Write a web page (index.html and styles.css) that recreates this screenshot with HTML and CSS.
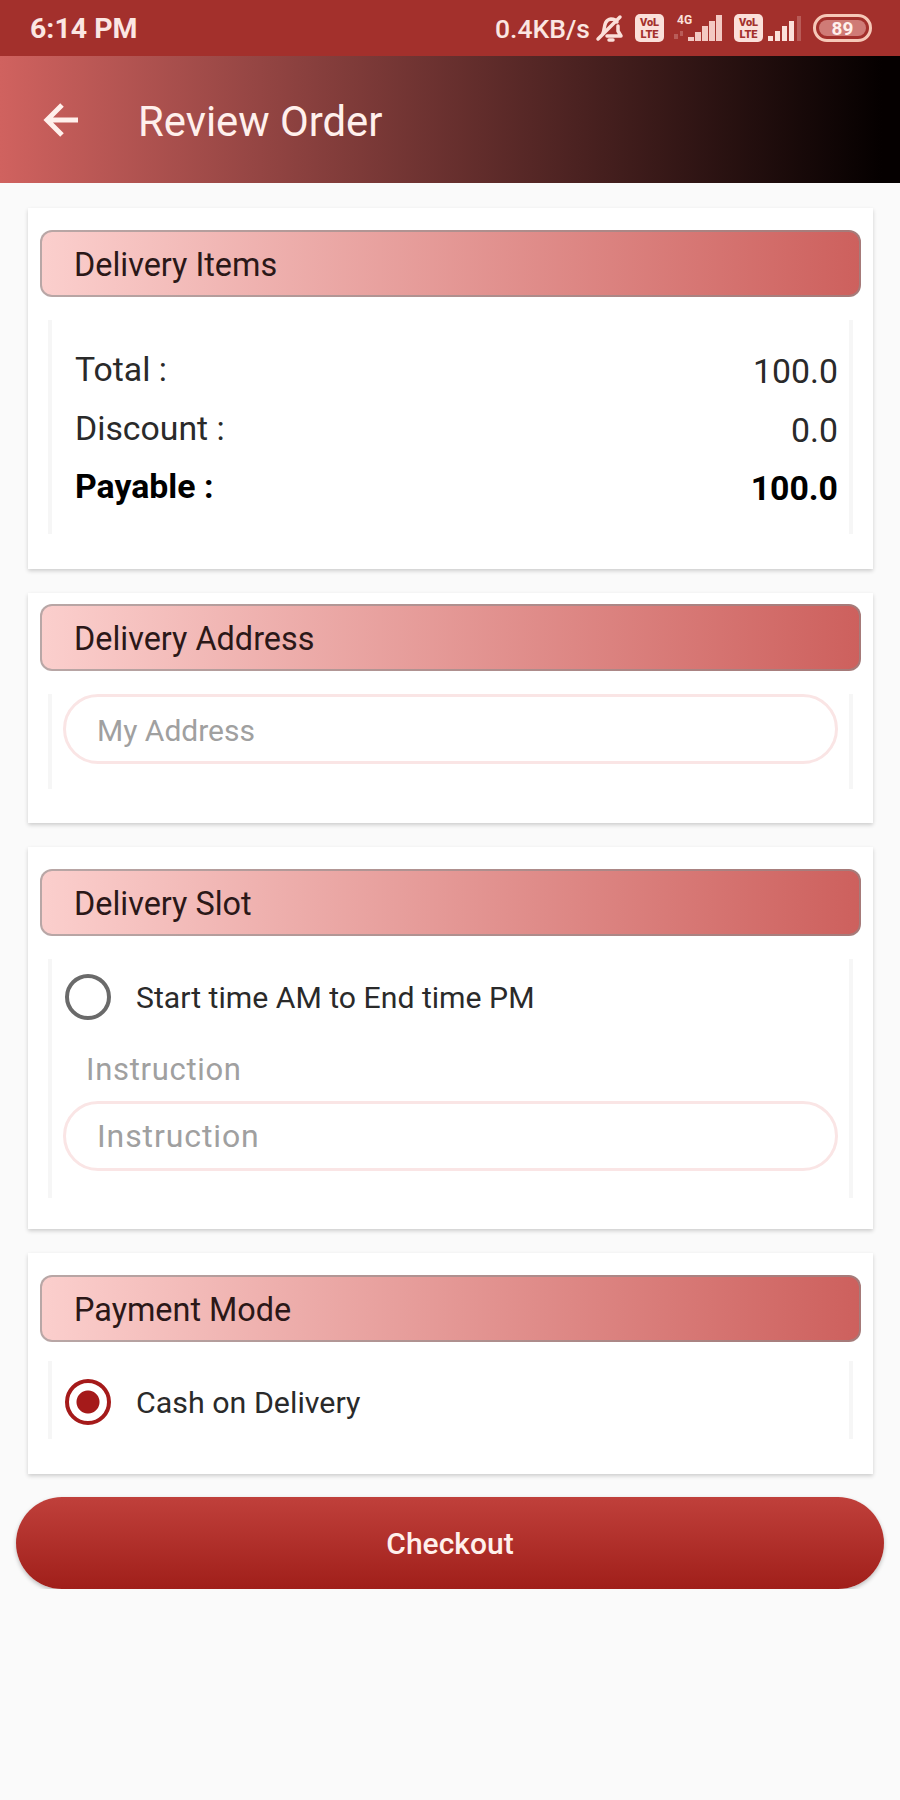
FILE: index.html
```
<!DOCTYPE html>
<html lang="en">
<head>
    <meta charset="UTF-8">
    <meta name="viewport" content="width=device-width, initial-scale=1.0">
    <title>Review Order</title>
    <link rel="stylesheet" href="styles.css">
</head>
<body>
    <div class="status-bar">
        <span class="clock">6:14 PM</span>
        <div class="status-icons">
            <span class="speed">0.4KB/s</span>
            <svg class="bell" width="30" height="30" viewBox="0 0 30 30" fill="none" stroke="#fbe0da" stroke-width="3.5" stroke-linecap="round" stroke-linejoin="round">
                <path d="M8 20c2-3 0-13 8-14 3 0 5 1 6 3M12 23h14l-3-5v-5"/>
                <path d="M14 27h4M25 4L3 26"/>
            </svg>
            <svg class="volte" width="29" height="28" viewBox="0 0 29 28">
                <rect width="29" height="28" rx="5" fill="#fbe0da"/>
                <text x="14.500" y="12" class="volte-text">VoL</text>
                <text x="14.500" y="24" class="volte-text">LTE</text>
            </svg>
            <svg class="signal-4g" width="50" height="28" viewBox="0 0 50 28">
                <text x="3" y="10" class="net-text">4G</text>
                <path d="M0 20h4v5H0zM6 17h3v5H6z" fill="#fbe0da" opacity="0.25"/>
                <g fill="#f3c9c3">
                    <rect x="14" y="23" width="6" height="4"/>
                    <rect x="21" y="18" width="6" height="9"/>
                    <rect x="28" y="12" width="6" height="15"/>
                    <rect x="35" y="7" width="6" height="20"/>
                    <rect x="42" y="1" width="6" height="26"/>
                </g>
            </svg>
            <svg class="volte" width="29" height="28" viewBox="0 0 29 28">
                <rect width="29" height="28" rx="5" fill="#fbe0da"/>
                <text x="14.500" y="12" class="volte-text">VoL</text>
                <text x="14.500" y="24" class="volte-text">LTE</text>
            </svg>
            <svg class="signal" width="34" height="28" viewBox="0 0 34 28" fill="#fbe0da">
                <rect x="0" y="22" width="5" height="5"/>
                <rect x="7" y="17" width="5" height="10"/>
                <rect x="14" y="12" width="5" height="15"/>
                <rect x="21" y="7" width="5" height="20"/>
                <rect x="29" y="2" width="4" height="25" opacity="0.25"/>
            </svg>
            <div class="battery"><span>89</span></div>
        </div>
    </div>

    <div class="toolbar">
        <svg class="back" width="36" height="36" viewBox="0 0 36 36" fill="none" stroke="#fff0ec" stroke-width="5">
            <path d="M35 18H5M19 3L4 18l15 15"/>
        </svg>
        <h1>Review Order</h1>
    </div>

    <form id="orderForm">
        <div class="card items">
            <h2>Delivery Items</h2>
            <div class="panel totals">
                <div class="row"><span>Total :</span><span class="value">100.0</span></div>
                <div class="row"><span>Discount :</span><span class="value">0.0</span></div>
                <div class="row payable"><span>Payable :</span><span class="value">100.0</span></div>
            </div>
        </div>

        <div class="card address">
            <h2>Delivery Address</h2>
            <div class="panel">
                <input type="text" class="field" name="address" placeholder="My Address">
            </div>
        </div>

        <div class="card slot">
            <h2>Delivery Slot</h2>
            <div class="panel">
                <label class="option"><input type="radio" name="slot">Start time AM to End time PM</label>
                <label class="hint" for="instruction">Instruction</label>
                <input type="text" class="field instruction" id="instruction" name="instruction" placeholder="Instruction">
            </div>
        </div>

        <div class="card payment">
            <h2>Payment Mode</h2>
            <div class="panel">
                <label class="option"><input type="radio" name="payment" checked>Cash on Delivery</label>
            </div>
        </div>

        <input type="submit" value="Checkout">
    </form>
</body>
</html>
```

FILE: styles.css
```
* {
    box-sizing: border-box;
}

body {
    font-family: Roboto, "Liberation Sans", sans-serif;
    margin: 0;
    padding: 0;
    background-color: #fafafa;
    color: #2a2a2a;
}

.status-bar {
    display: flex;
    justify-content: space-between;
    align-items: center;
    height: 56px;
    padding: 0 28px 0 30px;
    background-color: #a3302c;
    color: #fbe6e2;
}

.clock {
    font-size: 28.5px;
    font-weight: 700;
}

.status-icons {
    display: flex;
    align-items: center;
}

.speed {
    font-size: 26.5px;
    font-weight: 500;
}

.bell {
    margin-left: 5px;
}

.volte {
    margin-left: 10px;
}

.volte-text {
    font-size: 11px;
    font-weight: 900;
    text-anchor: middle;
    fill: #a3302c;
}

.signal-4g {
    margin-left: 10px;
}

.net-text {
    font-size: 12px;
    font-weight: 700;
    fill: #fbe0da;
}

.signal {
    margin-left: 5px;
}

.battery {
    display: flex;
    width: 59px;
    height: 28px;
    margin-left: 11px;
    padding: 3px;
    border: 3px solid #f6c8b8;
    border-radius: 14px;
}

.battery span {
    flex: 1;
    border-radius: 8px;
    background-color: #cf7b76;
    color: #fff0ec;
    font-size: 19px;
    font-weight: 700;
    line-height: 17px;
    text-align: center;
}

.toolbar {
    display: flex;
    align-items: center;
    height: 127px;
    padding: 1px 43px 0;
    background: linear-gradient(90deg, #d0625f 0%, #050000 98%);
}

h1 {
    margin: 2px 0 0 59px;
    color: #fff0ec;
    font-size: 41.8px;
    font-weight: 400;
}

form {
    display: flex;
    flex-direction: column;
    gap: 24px;
    padding: 25px 16px 0;
}

.card {
    margin: 0 11px 0 12px;
    padding: 22px 12px 0 12px;
    background-color: #fff;
    box-shadow: 0 2px 4px rgba(0, 0, 0, 0.18);
}

.items {
    height: 361px;
}

.address {
    height: 230px;
    padding-top: 11px;
}

.slot {
    height: 382px;
}

.payment {
    height: 221px;
}

h2 {
    height: 67px;
    margin: 0;
    padding-left: 32px;
    border: 2px solid rgba(140, 140, 140, 0.6);
    border-radius: 12px;
    background: linear-gradient(90deg, #fbcfcd, #cd605d) border-box;
    color: #2b1818;
    font-size: 32.4px;
    font-weight: 400;
    line-height: 67px;
}

.panel {
    display: flex;
    flex-direction: column;
    margin: 23px 8px 0;
    border: 0 solid #f6f6f6;
    border-width: 0 4px;
}

.totals {
    height: 214px;
    padding: 21px 11px 0 23px;
}

.row {
    display: flex;
    justify-content: space-between;
    height: 58.5px;
    font-size: 33.8px;
    line-height: 58px;
}

.value {
    padding-top: 2px;
}

.payable {
    color: #000;
    font-weight: 700;
}

.address .panel {
    height: 95px;
}

.field {
    height: 70px;
    margin: 0 11px 0 11px;
    padding: 2px 30px 0 31px;
    border: 3px solid #fae5e5;
    border-radius: 36px;
    background: none;
    font-family: inherit;
    font-size: 30px;
}

.field::placeholder {
    color: #a0a0a0;
}

.slot .panel {
    height: 239px;
}

.option {
    display: flex;
    align-items: center;
    gap: 25px;
    height: 48px;
    margin: 14px 0 0 13px;
    font-size: 30.2px;
}

.option input {
    appearance: none;
    width: 46px;
    height: 46px;
    margin: 0;
    border: 4px solid #6a6a6a;
    border-radius: 50%;
}

.option input:checked {
    border-color: #a51a1a;
    background: radial-gradient(circle, #a51a1a 11px, transparent 12px);
}

.hint {
    height: 80px;
    padding: 30px 0 0 34px;
    color: #a0a0a0;
    font-size: 31px;
    letter-spacing: 0.7px;
}

.instruction {
    padding-top: 0;
    font-size: 32px;
    letter-spacing: 0.9px;
}

.payment .panel {
    height: 78px;
    margin-top: 19px;
}

.payment .option {
    margin-top: 17px;
    font-size: 30.4px;
}

input[type="submit"] {
    height: 92px;
    margin-top: -1px;
    border: none;
    border-radius: 46px;
    background: linear-gradient(#c0403b, #a01f1a);
    box-shadow: 0 2px 4px rgba(0, 0, 0, 0.25);
    color: #fff0ec;
    font-family: inherit;
    font-size: 30px;
    font-weight: 500;
    cursor: pointer;
}
```
